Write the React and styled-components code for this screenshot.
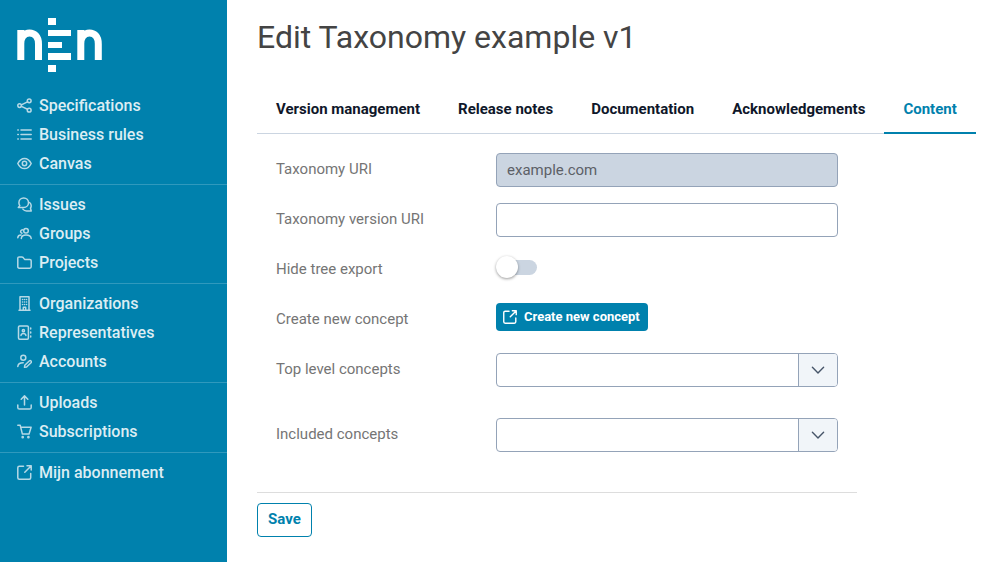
import React, { useState } from "react";
import styled, { createGlobalStyle, css } from "styled-components";

const colors = {
  brand: "#0081ad",
  navText: "#dcedf3",
  navIcon: "#b6d9e6",
  navLine: "#3099bd",
  title: "#444444",
  text: "#757575",
  tab: "#0f172a",
  line: "#cbd5e1",
  border: "#94a3b8",
  addon: "#f1f5f9",
  rule: "#dddddd",
  white: "#ffffff",
};

const GlobalStyle = createGlobalStyle`
  * {
    box-sizing: border-box;
  }
  body {
    margin: 0;
    background: ${colors.white};
    color: ${colors.text};
    font-family: Roboto, "Liberation Sans", sans-serif;
    font-size: 15px;
    line-height: 20px;
  }
  button, input, select {
    font: inherit;
  }
`;

const Layout = styled.div`
  display: grid;
  grid-template-columns: 227px minmax(0, 1fr);
  min-height: 100vh;
`;

const Sidebar = styled.aside`
  background: ${colors.brand};
`;

const LogoLink = styled.a`
  display: block;
  padding: 18px 16px 14px;
  line-height: 0;
`;

const NavGroup = styled.ul`
  margin: 0;
  padding: 5px 0 6px;
  list-style: none;
  & + & {
    border-top: 1px solid ${colors.navLine};
  }
`;

const NavLink = styled.a`
  display: flex;
  align-items: center;
  gap: 7px;
  height: 29px;
  padding: 0 17px;
  color: ${colors.navText};
  font-size: 16px;
  font-weight: 500;
  text-decoration: none;
  svg {
    flex: none;
    color: ${colors.navIcon};
  }
`;

const Main = styled.main`
  padding: 16px 32px 24px 30px;
`;

const Title = styled.h1`
  margin: 0 0 27px;
  color: ${colors.title};
  font-size: 32px;
  font-weight: 400;
  line-height: 42px;
`;

const TabList = styled.div`
  display: flex;
  width: fit-content;
  border-bottom: 1px solid ${colors.line};
`;

const Tab = styled.button`
  margin: 0 0 -1px;
  padding: 14px 19px 13px;
  border: 0;
  border-bottom: 2px solid transparent;
  background: none;
  color: ${colors.tab};
  font-weight: 700;
  white-space: nowrap;
  cursor: pointer;
  ${({ $active }) =>
    $active &&
    css`
      border-bottom-color: ${colors.brand};
      color: ${colors.brand};
    `}
`;

const Form = styled.form`
  max-width: 600px;
`;

const Fields = styled.div`
  padding: 19px 19px 40px;
  border-bottom: 1px solid ${colors.rule};
`;

const Row = styled.div`
  display: grid;
  grid-template-columns: 220px minmax(0, 1fr);
  min-height: ${({ $tall }) => ($tall ? "65px" : "50px")};
  &:last-child {
    min-height: 0;
  }
`;

const Label = styled.label`
  padding-top: 6px;
`;

const Cell = styled.div`
  display: flex;
  align-items: flex-start;
`;

const TextInput = styled.input`
  width: 100%;
  height: 34px;
  padding: 0 10px;
  border: 1px solid ${colors.border};
  border-radius: 4px;
  background: ${colors.white};
  color: ${colors.text};
  &:disabled {
    background: ${colors.line};
    color: #5c6067;
  }
`;

const Switch = styled.input`
  position: relative;
  appearance: none;
  width: 41px;
  height: 15px;
  margin: 7px 0;
  border-radius: 8px;
  background: ${colors.line};
  cursor: pointer;
  &::before {
    content: "";
    position: absolute;
    top: -4px;
    left: 0;
    width: 22px;
    height: 22px;
    border-radius: 50%;
    background: ${colors.white};
    box-shadow: 0 1px 3px rgba(0, 0, 0, 0.4);
  }
  &:checked {
    background: ${colors.brand};
  }
  &:checked::before {
    left: 19px;
  }
`;

const PrimaryButton = styled.button`
  display: flex;
  align-items: center;
  gap: 7px;
  height: 28px;
  padding: 0 8px 0 7px;
  border: 0;
  border-radius: 4px;
  background: ${colors.brand};
  color: ${colors.white};
  font-size: 13px;
  font-weight: 700;
  cursor: pointer;
`;

const SelectBox = styled.div`
  display: grid;
  grid-template-columns: minmax(0, 1fr) 39px;
  width: 100%;
  height: 34px;
  border: 1px solid ${colors.border};
  border-radius: 4px;
  overflow: hidden;
  select {
    grid-area: 1 / 1 / 2 / 3;
    appearance: none;
    padding: 0 10px;
    border: 0;
    background: transparent;
    color: ${colors.text};
  }
`;

const SelectArrow = styled.span`
  grid-area: 1 / 2;
  display: flex;
  align-items: center;
  justify-content: center;
  border-left: 1px solid ${colors.border};
  background: ${colors.addon};
  color: #475569;
  pointer-events: none;
`;

const SaveButton = styled.button`
  height: 34px;
  margin-top: 10px;
  padding: 0 10px 2px;
  border: 1px solid ${colors.brand};
  border-radius: 4px;
  background: ${colors.white};
  color: ${colors.brand};
  font-weight: 700;
  cursor: pointer;
`;

const Icon = ({ size = 15, children }) => (
  <svg
    width={size}
    height={size}
    viewBox="0 0 15 15"
    fill="none"
    stroke="currentColor"
    strokeWidth="1.5"
    strokeLinecap="round"
    strokeLinejoin="round"
    aria-hidden="true"
  >
    {children}
  </svg>
);

const ShareIcon = () => (
  <Icon>
    <circle cx="2.6" cy="7.6" r="1.8" />
    <circle cx="12.2" cy="2.8" r="1.9" />
    <circle cx="12.2" cy="12.2" r="1.9" />
    <path d="M4.4 6.8 10.5 3.8M4.4 8.4l6.1 2.900" />
  </Icon>
);

const ListIcon = () => (
  <Icon>
    <path d="M4 3h10.2M4 7.5h10.2M4 12h10.2M.8 3h.5M.8 7.5h.5M.8 12h.5" />
  </Icon>
);

const EyeIcon = () => (
  <Icon>
    <path d="M.8 7.5C2.400 4.200 4.800 2.400 7.500 2.400s5.100 1.800 6.700 5.100c-1.600 3.300-4 5.100-6.700 5.100S2.400 10.800.8 7.500Z" />
    <circle cx="7.500" cy="7.500" r="2.200" />
  </Icon>
);

const CommentsIcon = () => (
  <Icon>
    <path d="M1.300 10.500h5.400a4.800 4.800 0 1 0-4.800-4.800c0 1.100.3 2 .9 2.900Z" />
    <path d="M12.600 5.500c1.100.9 1.600 2 1.600 3.300 0 .9-.3 1.700-.7 2.400l.7 2.700h-4.600c-1.600 0-2.800-.6-3.700-1.800" />
  </Icon>
);

const UsersIcon = () => (
  <Icon>
    <circle cx="9" cy="4.800" r="2.300" />
    <path d="M4.300 12.500c.2-2.300 1.700-3.400 4.700-3.400s4.900 1.100 5.200 3.400" />
    <path d="M5 7.200A1.700 1.700 0 1 1 5.800 3.900M.8 11.800c.1-1.800 1.100-2.700 3.300-2.700" />
  </Icon>
);

const FolderIcon = () => (
  <Icon>
    <path d="M.8 11.800V3.300c0-.9.5-1.400 1.400-1.400h2.700c.5 0 .8.200 1.100.5l1.600 2h5.100c.9 0 1.500.5 1.500 1.400v6c0 .9-.6 1.400-1.500 1.400H2.200c-.9 0-1.400-.5-1.400-1.400Z" />
  </Icon>
);

const BuildingIcon = () => (
  <Icon>
    <path d="M2 14.200h11M3 14V.8h9V14M6.300 14v-2.800h2.400V14" />
    <path d="M5.500 3.400h.1M7.500 3.400h.1M9.500 3.400h.1M5.500 6h.1M7.500 6h.1M9.500 6h.1M5.500 8.600h.1M7.500 8.600h.1M9.500 8.600h.1" />
  </Icon>
);

const AddressBookIcon = () => (
  <Icon>
    <path d="M2.700.9h7.600c.8 0 1.100.3 1.100 1.100v11c0 .8-.3 1.200-1.100 1.200H2.700c-.8 0-1.200-.4-1.200-1.200V2c0-.8.4-1.100 1.200-1.100Z" />
    <circle cx="6.400" cy="5.700" r="1.100" />
    <path d="M4 10.500c.2-1.500 1-2.100 2.400-2.100s2.300.6 2.500 2.100M13.700 3v1M13.700 7v1M13.700 11v1" />
  </Icon>
);

const UserEditIcon = () => (
  <Icon>
    <circle cx="6.300" cy="3.800" r="2.500" />
    <path d="M.8 12.500c.2-2.600 1.900-3.700 5.400-3.700" />
    <path d="m7.500 13.300.3-2 4.400-4.300c1.300-1.100 2.900.5 1.800 1.800L9.600 13Z" />
  </Icon>
);

const UploadIcon = () => (
  <Icon>
    <path d="M7.500 10V1M4.200 4.200 7.500.9l3.300 3.300M.8 10v2.500c0 1 .6 1.600 1.600 1.600h10.200c1 0 1.600-.6 1.600-1.600V10" />
  </Icon>
);

const CartIcon = () => (
  <Icon>
    <path d="M.8 1.200h2.400l2.200 8.900h6.600l2.100-6.800H3.900" />
    <circle cx="5.700" cy="13.200" r=".6" />
    <circle cx="11.400" cy="13.200" r=".6" />
  </Icon>
);

const ExternalIcon = ({ size }) => (
  <Icon size={size}>
    <path d="M6.500 1.300H2.300C1.300 1.300.8 1.800.8 2.800v9.900c0 1 .5 1.500 1.500 1.500h9.900c1 0 1.500-.5 1.500-1.500V8.500" />
    <path d="M10 .8h4.200V5M14 1 7.800 7.200" />
  </Icon>
);

const ChevronIcon = () => (
  <Icon size={14}>
    <path d="m1.500 4.600 6 6 6-6" />
  </Icon>
);

const Logo = () => (
  <svg width="86" height="54" viewBox="0 0 86 54" role="img" aria-label="NEN">
    <g fill={colors.white}>
      <rect x="32" y="0" width="8" height="7" />
      <rect x="32" y="12" width="23" height="6" />
      <rect x="32" y="24" width="14" height="6" />
      <rect x="32" y="35" width="23" height="7" />
      <rect x="32" y="47" width="8" height="7" />
    </g>
    <g fill="none" stroke={colors.white} strokeWidth="7">
      <path d="M4.800 42V12M4.800 26C4.800 18 9 15 13.500 15S22.500 18 22.500 26V42" />
      <path d="M64.800 42V12M64.800 26C64.800 18 69 15 73.500 15S82.300 18 82.300 26V42" />
    </g>
  </svg>
);

const navGroups = [
  [
    ["Specifications", ShareIcon],
    ["Business rules", ListIcon],
    ["Canvas", EyeIcon],
  ],
  [
    ["Issues", CommentsIcon],
    ["Groups", UsersIcon],
    ["Projects", FolderIcon],
  ],
  [
    ["Organizations", BuildingIcon],
    ["Representatives", AddressBookIcon],
    ["Accounts", UserEditIcon],
  ],
  [
    ["Uploads", UploadIcon],
    ["Subscriptions", CartIcon],
  ],
  [["Mijn abonnement", ExternalIcon]],
];

const tabs = [
  "Version management",
  "Release notes",
  "Documentation",
  "Acknowledgements",
  "Content",
];

const ConceptSelect = ({ id }) => (
  <SelectBox>
    <SelectArrow>
      <ChevronIcon />
    </SelectArrow>
    <select id={id} defaultValue="">
      <option value="" />
    </select>
  </SelectBox>
);

const Field = ({ id, label, tall, children }) => (
  <Row $tall={tall}>
    <Label htmlFor={id}>{label}</Label>
    <Cell>{children}</Cell>
  </Row>
);

const App = () => {
  const [active, setActive] = useState("Content");

  return (
    <>
      <GlobalStyle />
      <Layout>
        <Sidebar>
          <LogoLink href="#home">
            <Logo />
          </LogoLink>
          <nav>
            {navGroups.map((group, i) => (
              <NavGroup key={i}>
                {group.map(([name, NavIcon]) => (
                  <li key={name}>
                    <NavLink href="#">
                      <NavIcon />
                      {name}
                    </NavLink>
                  </li>
                ))}
              </NavGroup>
            ))}
          </nav>
        </Sidebar>
        <Main>
          <Title>Edit Taxonomy example v1</Title>
          <TabList role="tablist">
            {tabs.map((name) => (
              <Tab
                key={name}
                type="button"
                role="tab"
                aria-selected={name === active}
                $active={name === active}
                onClick={() => setActive(name)}
              >
                {name}
              </Tab>
            ))}
          </TabList>
          <Form onSubmit={(e) => e.preventDefault()}>
            <Fields>
              <Field id="uri" label="Taxonomy URI">
                <TextInput id="uri" defaultValue="example.com" disabled />
              </Field>
              <Field id="version-uri" label="Taxonomy version URI">
                <TextInput id="version-uri" />
              </Field>
              <Field id="hide-tree" label="Hide tree export">
                <Switch id="hide-tree" type="checkbox" role="switch" />
              </Field>
              <Field id="create" label="Create new concept">
                <PrimaryButton id="create" type="button">
                  <ExternalIcon size={14} />
                  Create new concept
                </PrimaryButton>
              </Field>
              <Field id="top-level" label="Top level concepts" tall>
                <ConceptSelect id="top-level" />
              </Field>
              <Field id="included" label="Included concepts">
                <ConceptSelect id="included" />
              </Field>
            </Fields>
            <SaveButton type="submit">Save</SaveButton>
          </Form>
        </Main>
      </Layout>
    </>
  );
};

export default App;
